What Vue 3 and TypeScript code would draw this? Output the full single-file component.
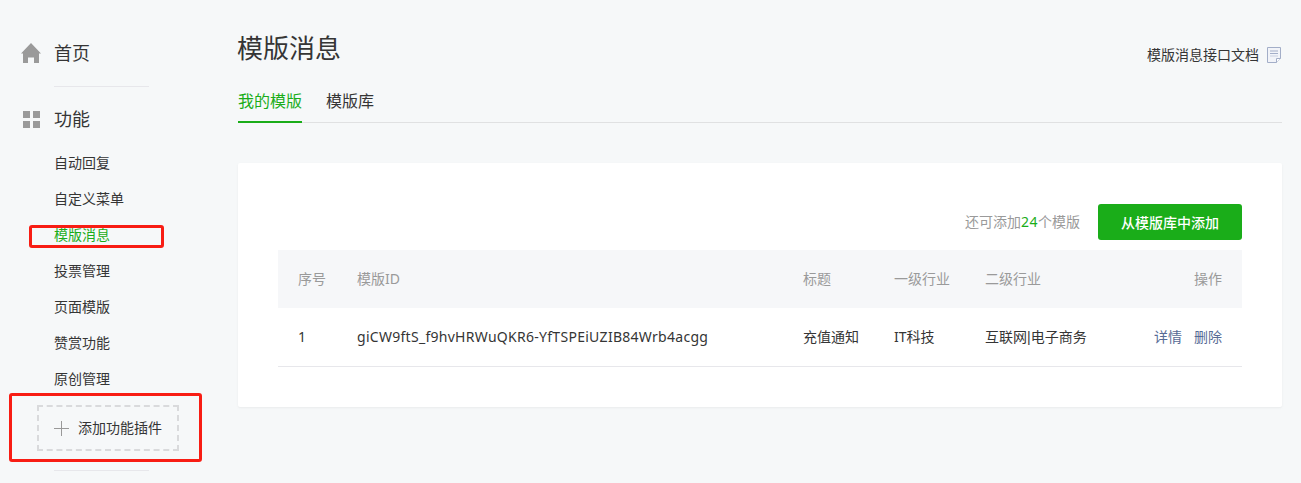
<template>
  <div class="page">
    <aside class="side">
      <div class="nav-head first">
        <svg class="nav-icon" viewBox="0 0 22 20" width="22" height="20"><path d="M11 0 L21 10.500 L19 10.500 V20 H14 V14.500 H8 V20 H3 V10.500 H1 Z" fill="#9a9a9a" /></svg>
        <span>首页</span>
      </div>
      <div class="nav-line"></div>
      <div class="nav-head second">
        <svg class="nav-icon" viewBox="0 0 22 20" width="22" height="20"><g fill="#9a9a9a"><rect x="3" y="2" width="7" height="7" /><rect x="13" y="2" width="7" height="7" /><rect x="3" y="12" width="7" height="7" /><rect x="13" y="12" width="7" height="7" /></g></svg>
        <span>功能</span>
      </div>
      <ul class="nav-list">
        <li v-for="item in menu" :key="item" :class="{ active: item === '模版消息' }">{{ item }}</li>
      </ul>
      <div class="add-plugin">
        <svg viewBox="0 0 15 15" width="15" height="15"><path d="M7.500 0V15M0 7.500H15" stroke="#999" stroke-width="1" fill="none" /></svg>
        <span>添加功能插件</span>
      </div>
      <div class="nav-line bottom"></div>
    </aside>

    <main class="main">
      <div class="title-row">
        <h2>模版消息</h2>
        <a class="doc-link">
          模版消息接口文档
          <svg viewBox="0 0 14 16" width="14" height="16"><path d="M.5.500H13.500V11.500L9.500 15.500H.5Z" fill="#f2f4f9" stroke="#a3aec8" /><path d="M3 4H11M3 6.500H11" stroke="#a3aec8" stroke-width="1.200" /><path d="M3 9H11" stroke="#c9d0e0" /><path d="M9.500 15.500V11.500H13.500" fill="#fff" stroke="#a3aec8" /></svg>
        </a>
      </div>
      <div class="tabs">
        <span class="tab on">我的模版</span>
        <span class="tab">模版库</span>
      </div>

      <section class="card">
        <div class="tool-row">
          <span class="quota">还可添加<em>24</em>个模版</span>
          <button class="add-btn">从模版库中添加</button>
        </div>
        <div class="grid head">
          <span>序号</span><span>模版ID</span><span>标题</span><span>一级行业</span><span>二级行业</span><span class="ops">操作</span>
        </div>
        <div v-for="row in rows" :key="row.id" class="grid body">
          <span>{{ row.no }}</span>
          <span class="tpl-id">{{ row.id }}</span>
          <span>{{ row.title }}</span>
          <span>{{ row.first }}</span>
          <span>{{ row.parent }}<i class="pipe">|</i>{{ row.child }}</span>
          <span class="ops"><a>详情</a><a>删除</a></span>
        </div>
      </section>
    </main>

    <div class="mark mark-a"></div>
    <div class="mark mark-b"></div>
  </div>
</template>

<script setup lang="ts">
const menu: string[] = ['自动回复', '自定义菜单', '模版消息', '投票管理', '页面模版', '赞赏功能', '原创管理']
const rows = [
  { no: 1, id: 'giCW9ftS_f9hvHRWuQKR6-YfTSPEiUZIB84Wrb4acgg', title: '充值通知', first: 'IT科技', parent: '互联网', child: '电子商务' },
]
</script>

<style>
html, body { margin: 0; background: #f6f8f9; overflow: hidden; }
</style>

<style scoped>
.page { display: flex; position: relative; width: 1301px; height: 483px; overflow: hidden; background: #f6f8f9; color: #353535; font-family: "Noto Sans", "Noto Sans CJK SC", sans-serif; font-size: 14px; }
.side { width: 238px; flex: none; }
.nav-head { display: flex; align-items: center; height: 24px; padding-left: 20px; font-size: 18px; line-height: 24px; }
.nav-head.first { margin-top: 41px; }
.nav-head.second { margin-top: 20px; }
.nav-icon { margin-right: 12px; }
.nav-line { width: 95px; height: 1px; margin: 21px 0 0 54px; background: #e7e7eb; }
.nav-line.bottom { margin-top: 19px; }
.nav-list { list-style: none; margin: 14px 0 0; padding: 0 0 0 54px; }
.nav-list li { height: 36px; line-height: 36px; }
.nav-list li.active { color: #1aad19; }
.add-plugin { display: flex; align-items: center; box-sizing: border-box; width: 142px; height: 46px; margin: 8px 0 0 37px; padding-left: 15px; border: 2px dashed #d9dadc; }
.add-plugin span { margin-left: 9px; font-size: 14px; line-height: 20px; }
.main { flex: 1; min-width: 0; padding-right: 19px; }
.title-row { display: flex; justify-content: space-between; align-items: flex-start; height: 82px; }
.title-row h2 { margin: 29px 0 0 -1px; font-size: 26px; line-height: 38px; font-weight: 400; }
.doc-link { display: flex; align-items: center; gap: 8px; margin: 47px 1px 0 0; line-height: 16px; }
.tabs { display: flex; gap: 24px; height: 41px; border-bottom: 1px solid #e0e1e2; box-sizing: border-box; }
.tab { height: 41px; box-sizing: border-box; font-size: 16px; line-height: 38px; }
.tab.on { color: #1aad19; border-bottom: 2px solid #1aad19; }
.card { margin-top: 40px; height: 244px; box-sizing: border-box; padding: 41px 40px 0; background: #fff; border-radius: 2px; box-shadow: 0 1px 2px rgba(150, 150, 150, .12); }
.tool-row { display: flex; justify-content: flex-end; align-items: center; height: 36px; margin-bottom: 10px; }
.quota { margin-right: 18px; color: #9a9a9a; line-height: 36px; }
.quota em { font-style: normal; color: #1aad19; letter-spacing: .5px; }
.add-btn { width: 144px; height: 36px; padding: 0; border: 0; border-radius: 3px; background: #1aad19; color: #fff; font: 500 14px "Noto Sans", "Noto Sans CJK SC", sans-serif; }
.grid { display: grid; grid-template-columns: 59px 446px 91px 91px 1fr 90px; box-sizing: border-box; padding: 0 20px 2px; height: 58px; align-items: center; }
.grid.head { background: #f6f7f9; color: #9a9a9a; }
.grid.body { border-bottom: 1px solid #e7e7eb; height: 59px; }
.tpl-id { letter-spacing: .28px; }
.pipe { font: normal 14px "Liberation Sans", sans-serif; }
.ops { text-align: right; }
.ops a { color: #576b95; margin-left: 12px; }
.mark { position: absolute; box-sizing: border-box; border: 3px solid #f81d14; border-radius: 3px; }
.mark-a { left: 29px; top: 225px; width: 135px; height: 23px; }
.mark-b { left: 9px; top: 393px; width: 193px; height: 69px; }
</style>
